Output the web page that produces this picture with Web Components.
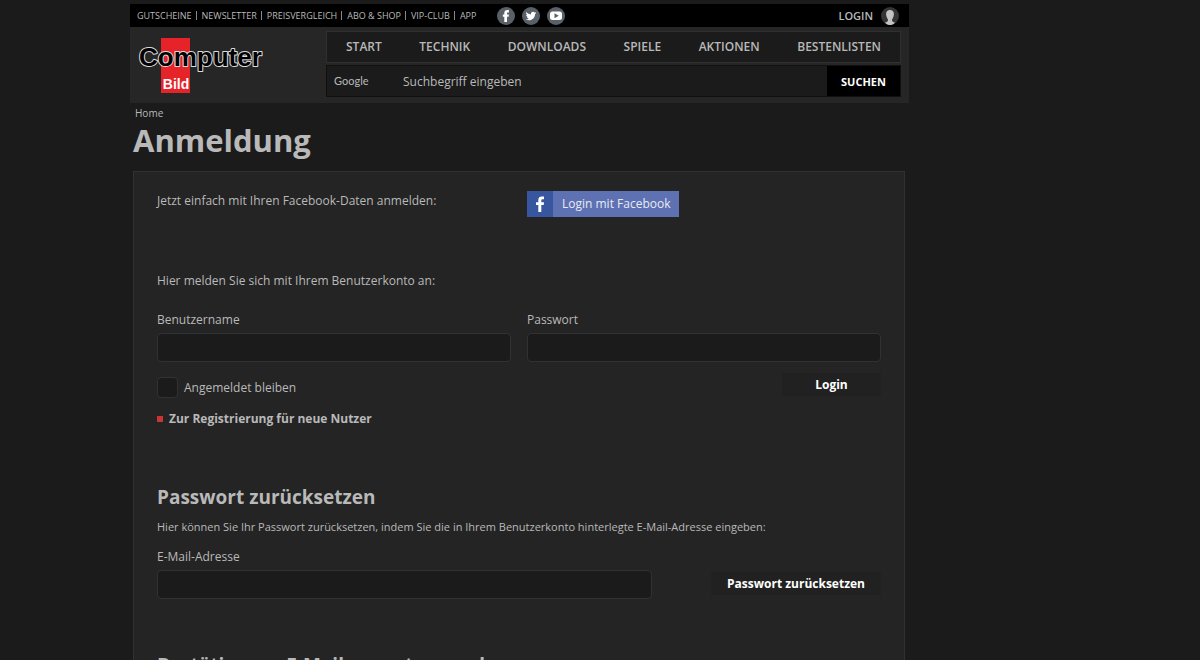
<!DOCTYPE html>
<html lang="de">
<head>
<meta charset="utf-8">
<meta name="viewport" content="width=device-width, initial-scale=1">
<title>Anmeldung - COMPUTER BILD</title>
<style>
html { background: #1b1b1b; }
body { margin: 0; font-family: "Open Sans", "Noto Sans", sans-serif; font-size: 12px; line-height: 18px; color: #b9b9b9; }
</style>
</head>
<body>
<cb-page></cb-page>
<script>
const define = (name, html, setup) => {
  const template = document.createElement('template');
  template.innerHTML = html;
  customElements.define(name, class extends HTMLElement {
    constructor() {
      super();
      this.attachShadow({ mode: 'open' }).append(template.content.cloneNode(true));
    }
    connectedCallback() { if (setup) setup(this, this.shadowRoot); }
  });
};

define('cb-logo', `
<style>
:host { display: block; }
a { display: block; }
svg { display: block; overflow: visible; }
text { font-family: "Liberation Sans Narrow", "Liberation Sans", sans-serif; font-weight: bold; }
</style>
<a href="#" aria-label="Computer Bild">
<svg width="126" height="60" viewBox="0 0 126 60">
  <rect x="23" y="3" width="29" height="55" fill="#e52329"/>
  <text x="1" y="31" font-size="26" fill="#000" stroke="#ddd" stroke-width="2" stroke-linejoin="round" paint-order="stroke">Computer</text>
  <text x="38" y="54" font-size="14" text-anchor="middle" fill="#fff">Bild</text>
</svg>
</a>`);

define('cb-social', `
<style>
:host { display: flex; gap: 7px; }
a { display: block; }
svg { display: block; width: 18px; height: 18px; }
</style>
<a href="#" aria-label="Facebook"><svg viewBox="0 0 18 18"><circle cx="9" cy="9" r="9" fill="#596067"/><path fill="#fff" d="M7.300 15V9.800H5.800V7.400h1.500V6c0-2 1.100-3 3-3h1.600v2.400h-1c-.7 0-.9.300-.9.900v1.100h1.900l-.3 2.400H10V15z"/></svg></a>
<a href="#" aria-label="Twitter"><svg viewBox="0 0 18 18"><circle cx="9" cy="9" r="9" fill="#596067"/><path fill="#fff" d="M14.300 5.700c-.4.200-.8.300-1.200.4.400-.3.800-.7.900-1.200-.4.200-.9.400-1.400.5A2.200 2.200 0 0 0 8.900 7.400C7.100 7.300 5.500 6.500 4.400 5.100c-.6 1-.3 2.300.7 2.900-.4 0-.7-.1-1-.3 0 1.100.8 2 1.800 2.200-.3.100-.7.100-1 0 .3.900 1.100 1.500 2 1.500-.9.700-2 1-3.200.9 4.200 2.600 9.300-.1 9.400-5.300.5-.3.900-.8 1.200-1.300z"/></svg></a>
<a href="#" aria-label="YouTube"><svg viewBox="0 0 18 18"><circle cx="9" cy="9" r="9" fill="#596067"/><rect x="3" y="4.500" width="12" height="8.500" rx="2.500" fill="#fff"/><path fill="#596067" d="M7.500 6.300v5l4.200-2.500z"/></svg></a>`);

define('cb-topbar', `
<style>
:host { display: flex; align-items: center; height: 23px; padding: 0 10px 0 7px; background: #000; }
nav { display: flex; align-items: center; font-size: 9px; line-height: 10px; white-space: nowrap; }
nav a + a { border-left: 1px solid #888; margin-left: 4px; padding-left: 5px; line-height: 9px; }
a { color: inherit; text-decoration: none; }
cb-social { margin-left: 21px; }
.login { display: flex; align-items: center; gap: 8px; margin-left: auto; font-size: 11px; font-weight: 600; line-height: 18px; }
.login svg { width: 18px; height: 18px; }
</style>
<nav aria-label="Service">
<a href="#">GUTSCHEINE</a><a href="#">NEWSLETTER</a><a href="#">PREISVERGLEICH</a><a href="#">ABO &amp; SHOP</a><a href="#">VIP-CLUB</a><a href="#">APP</a>
</nav>
<cb-social></cb-social>
<a class="login" href="#">LOGIN <svg viewBox="0 0 18 18" aria-hidden="true"><circle cx="9" cy="9" r="9" fill="#353535"/><path fill="#c4c4c4" d="M9 3c-2.400 0-4 1.400-3.900 4 0 1.200.2 1.500.4 2.400.3 1.300.8 2 1.400 2.700v1.600c-.4 1-1.900 1.500-3 2.100 3 3 7.300 3 10.200 0-1.100-.6-2.600-1.100-3-2.100v-1.600c.6-.7 1.100-1.400 1.400-2.700.2-.9.400-1.200.4-2.400C13 4.400 11.400 3 9 3z"/></svg></a>`);

define('cb-nav', `
<style>
:host { display: block; border: 1px solid #303030; background: #1b1b1b; }
nav { display: flex; justify-content: space-between; padding: 0 19px; line-height: 30px; font-weight: 600; }
a { color: inherit; text-decoration: none; }
</style>
<nav aria-label="Hauptnavigation">
<a href="#">START</a><a href="#">TECHNIK</a><a href="#">DOWNLOADS</a><a href="#">SPIELE</a><a href="#">AKTIONEN</a><a href="#">BESTENLISTEN</a>
</nav>`);

define('cb-search', `
<style>
:host { display: block; }
form { display: flex; height: 32px; box-sizing: border-box; border: 1px solid #101010; background: #1b1b1b; }
label { width: 68px; padding-left: 7px; box-sizing: border-box; font: 11px/30px Lato, sans-serif; }
input { flex: 1; min-width: 0; border: 0; padding: 0 8px; background: none; color: inherit; font: 12px "Open Sans", sans-serif; outline: 0; }
input::placeholder { color: #b9b9b9; opacity: 1; }
button { width: 73px; border: 0; padding: 0; background: #000; color: #fff; font: 700 11px "Open Sans", sans-serif; }
</style>
<form onsubmit="return false">
<label for="q">Google</label>
<input id="q" type="text" placeholder="Suchbegriff eingeben">
<button>SUCHEN</button>
</form>`);

define('cb-header', `
<style>
:host { display: block; background: #262626; }
.main { display: grid; grid-template-columns: 188px minmax(0, 1fr); padding: 4px 8px 6px; }
cb-logo { padding-top: 4px; }
.tools { display: grid; gap: 2px; }
</style>
<cb-topbar></cb-topbar>
<div class="main"><cb-logo></cb-logo><div class="tools"><cb-nav></cb-nav><cb-search></cb-search></div></div>`);

define('cb-field', `
<style>
:host { display: block; }
label { display: block; margin-bottom: 3px; line-height: 20px; }
input { display: block; width: 100%; height: 29px; box-sizing: border-box; padding: 0 8px; border: 1px solid #2f3235; border-radius: 4px; background: #1b1b1b; color: inherit; font: inherit; }
</style>
<label for="f"></label><input id="f">`, (host, root) => {
  root.querySelector('label').textContent = host.getAttribute('label');
  root.querySelector('input').type = host.getAttribute('type') || 'text';
});

define('cb-button', `
<style>
:host { display: block; }
button { display: block; height: 23px; min-width: 99px; padding: 0 16px; border: 0; border-radius: 2px; background: #212121; color: #fff; font: 700 12px/22px "Open Sans", sans-serif; }
</style>
<button type="button"><slot></slot></button>`);

define('cb-facebook-button', `
<style>
:host { display: block; }
button { display: flex; align-items: center; height: 26px; padding: 0; border: 0; background: #5d71b3; color: #e8ebf5; font: inherit; }
svg { width: 26px; height: 26px; background: #3855a0; }
span { padding: 0 9px; }
</style>
<button type="button"><svg viewBox="0 0 26 26" aria-hidden="true"><path fill="#fff" d="M11.300 21v-7H9v-2.800h2.300V9c0-2.400 1.300-3.500 3.500-3.500H17v2.700h-1.300c-1 0-1.400.4-1.400 1.300v1.700H17l-.3 2.800h-2.400v7z"/></svg><span><slot></slot></span></button>`);

define('cb-login-form', `
<style>
:host { display: block; padding-bottom: 3px; }
p { margin: 0; line-height: 20px; }
.row { display: grid; grid-template-columns: 1fr 1fr; column-gap: 16px; }
.social { padding-bottom: 54px; }
.fields { margin-top: 19px; }
.actions { display: flex; justify-content: space-between; align-items: flex-start; margin-top: 11px; }
.stay { display: flex; align-items: center; gap: 6px; margin-top: 4px; }
input { appearance: none; margin: 0; width: 21px; height: 21px; border: 1px solid #2f3235; border-radius: 4px; background: #1b1b1b; }
.register { display: flex; width: fit-content; align-items: center; gap: 6px; margin-top: 12px; color: inherit; font-weight: 700; text-decoration: none; }
.register::before { content: ""; width: 6px; height: 6px; background: #c93434; }
</style>
<div class="row social"><p>Jetzt einfach mit Ihren Facebook-Daten anmelden:</p><cb-facebook-button>Login mit Facebook</cb-facebook-button></div>
<p>Hier melden Sie sich mit Ihrem Benutzerkonto an:</p>
<div class="row fields"><cb-field label="Benutzername"></cb-field><cb-field label="Passwort" type="password"></cb-field></div>
<div class="actions"><label class="stay"><input type="checkbox"> Angemeldet bleiben</label><cb-button>Login</cb-button></div>
<a class="register" href="#">Zur Registrierung für neue Nutzer</a>`);

define('cb-mail-form', `
<style>
:host { display: block; margin-top: 52px; }
h2 { margin: 0; font-size: 19px; line-height: 28px; font-weight: 700; }
p { margin: 7px 0 11px; font-size: 11px; }
.row { display: flex; justify-content: space-between; align-items: flex-end; }
cb-field { flex: 0 1 495px; }
cb-button { margin-bottom: 4px; }
</style>
<h2></h2><p></p>
<div class="row"><cb-field label="E-Mail-Adresse" type="email"></cb-field><cb-button></cb-button></div>`, (host, root) => {
  root.querySelector('h2').textContent = host.getAttribute('heading');
  root.querySelector('p').textContent = host.getAttribute('text');
  root.querySelector('cb-button').textContent = host.getAttribute('action');
});

define('cb-page', `
<style>
:host { display: block; padding: 4px 291px 0 130px; }
main { padding: 0 4px 0 3px; }
.crumbs { display: block; padding: 1px 2px 0; font-size: 10px; }
.crumbs a { color: inherit; text-decoration: none; }
h1 { margin: 0 0 13px; font-size: 31px; line-height: 36px; font-weight: 700; }
.card { border: 1px solid #2f3235; padding: 19px 23px 40px; background: #242424; }
@media (max-width: 1050px) { :host { padding: 4px 12px 0; } }
</style>
<cb-header></cb-header>
<main>
<nav class="crumbs" aria-label="Breadcrumb"><a href="#">Home</a></nav>
<h1>Anmeldung</h1>
<div class="card">
<cb-login-form></cb-login-form>
<cb-mail-form heading="Passwort zurücksetzen" text="Hier können Sie Ihr Passwort zurücksetzen, indem Sie die in Ihrem Benutzerkonto hinterlegte E-Mail-Adresse eingeben:" action="Passwort zurücksetzen"></cb-mail-form>
<cb-mail-form heading="Bestätigungs-E-Mail erneut zusenden" text="" action="E-Mail zusenden"></cb-mail-form>
</div>
</main>`);
</script>
</body>
</html>
